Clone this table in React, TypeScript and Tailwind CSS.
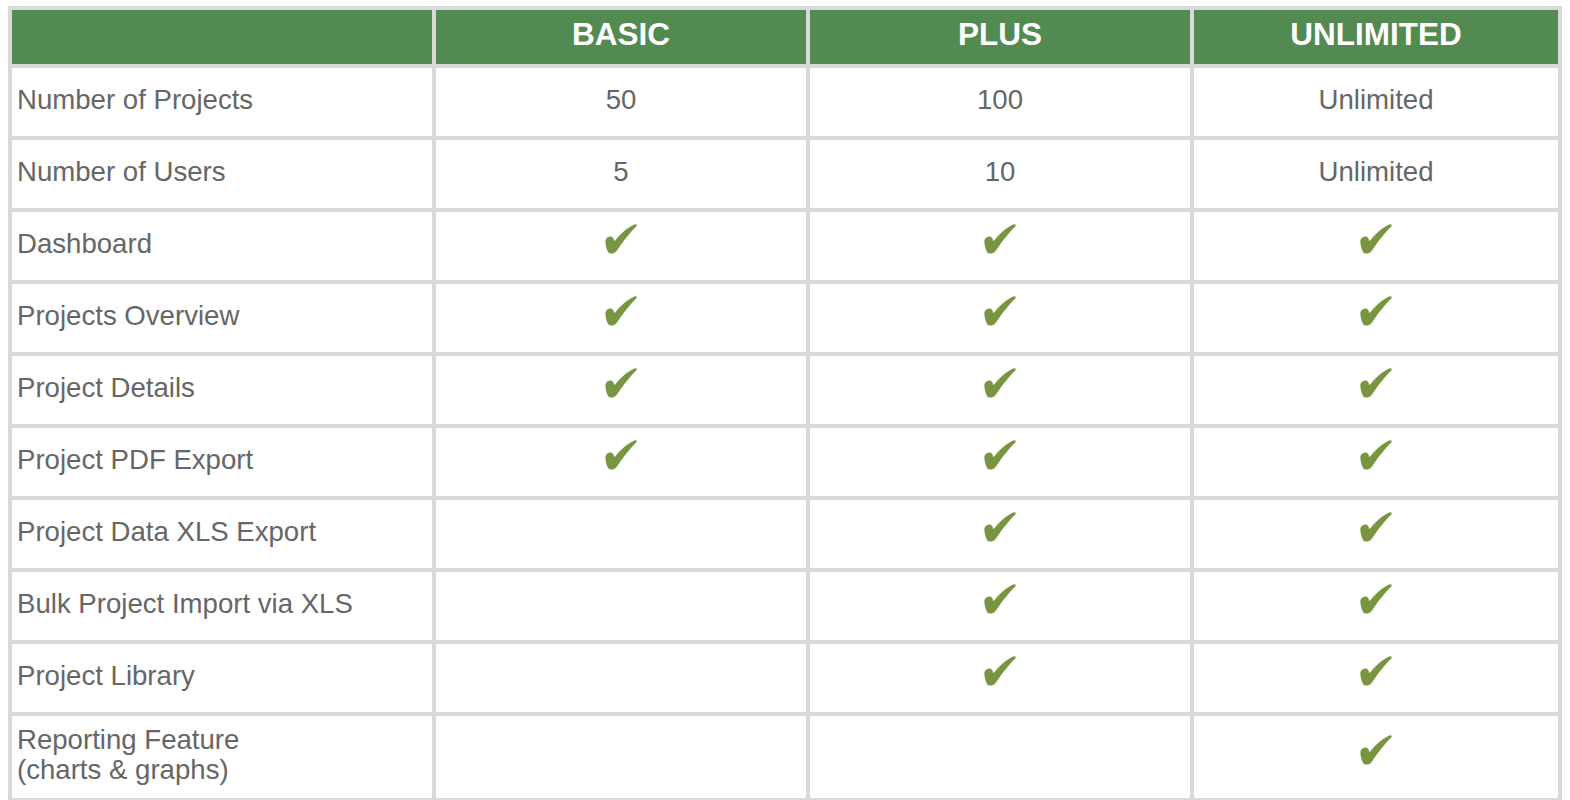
type Row = {
  label: string[]
  basic: string | boolean
  plus: string | boolean
  unlimited: string | boolean
}

const rows: Row[] = [
  { label: ["Number of Projects"], basic: "50", plus: "100", unlimited: "Unlimited" },
  { label: ["Number of Users"], basic: "5", plus: "10", unlimited: "Unlimited" },
  { label: ["Dashboard"], basic: true, plus: true, unlimited: true },
  { label: ["Projects Overview"], basic: true, plus: true, unlimited: true },
  { label: ["Project Details"], basic: true, plus: true, unlimited: true },
  { label: ["Project PDF Export"], basic: true, plus: true, unlimited: true },
  { label: ["Project Data XLS Export"], basic: false, plus: true, unlimited: true },
  { label: ["Bulk Project Import via XLS"], basic: false, plus: true, unlimited: true },
  { label: ["Project Library"], basic: false, plus: true, unlimited: true },
  { label: ["Reporting Feature", "(charts & graphs)"], basic: false, plus: false, unlimited: true },
]

// heavy check mark, drawn so it matches the dingbat in the original
function Check() {
  return (
    <svg
      viewBox="0 0 32 30"
      className="mx-auto mb-[10px] block h-[30px] w-[32px]"
      aria-label="yes"
    >
      <path
        fill="#789640"
        d="M5.8 29.6C3.6 29.6 2.2 27 1.3 23.4C0.7 21 0.4 19.3 0.4 17.6C0.4 14.6 2.8 12.4 5.6 12.4C7.6 12.4 8.7 14.2 9.6 17.2C15 10 22 3.6 29.6 0.4C30.8 -0.1 32 0.8 31.6 2C24.5 9.5 17 18.5 11.8 26.8C10.6 28.7 8.6 29.6 5.8 29.6Z"
      />
    </svg>
  )
}

function Value({ v }: { v: string | boolean }) {
  if (v === true) return <Check />
  if (v === false) return null
  return <span>{v}</span>
}

export default function App() {
  return (
    <div className="bg-white pl-[8px] pt-[6px] font-['Liberation_Sans',Arial,sans-serif]">
      <table className="w-[1554px] table-fixed border-separate border-spacing-[4px] bg-[#d9d9d9] text-[27.6px] text-[#666666]">
        <colgroup>
          <col className="w-[420px]" />
          <col className="w-[370px]" />
          <col className="w-[380px]" />
          <col className="w-[364px]" />
        </colgroup>
        <thead>
          <tr className="h-[54px]">
            <th className="bg-[#538a52] p-0" />
            {["BASIC", "PLUS", "UNLIMITED"].map((h) => (
              <th
                key={h}
                className="bg-[#538a52] px-0 pt-0 pb-[4px] text-center align-middle text-[31.5px] font-bold leading-none text-white"
              >
                {h}
              </th>
            ))}
          </tr>
        </thead>
        <tbody>
          {rows.map((r, i) => (
            <tr key={i} className={i === rows.length - 1 ? "h-[82px]" : "h-[68px]"}>
              <td className="bg-white pt-0 pb-[5px] pl-[5px] pr-0 align-middle leading-[30px]">
                {r.label.map((l) => (
                  <div key={l}>{l}</div>
                ))}
              </td>
              {[r.basic, r.plus, r.unlimited].map((v, j) => (
                <td key={j} className="bg-white px-0 pt-0 pb-[4px] text-center align-middle">
                  <Value v={v} />
                </td>
              ))}
            </tr>
          ))}
        </tbody>
      </table>
    </div>
  )
}
